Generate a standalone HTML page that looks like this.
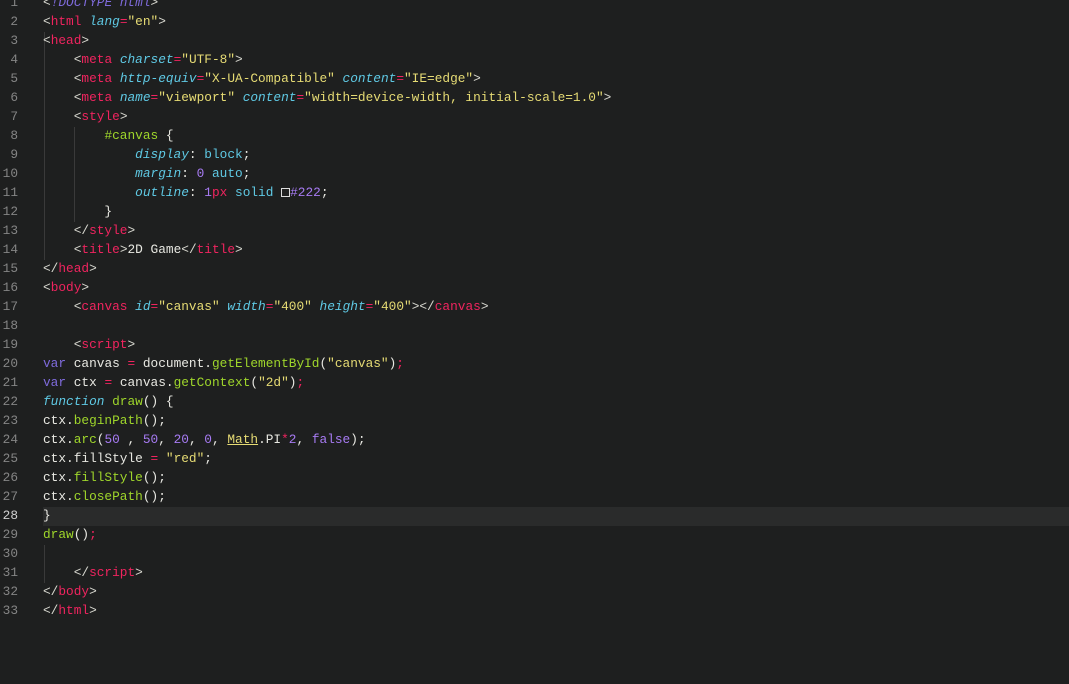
<!DOCTYPE html>
<html><head><meta charset="utf-8"><style>
body{margin:0;background:#1e1f1f;width:1069px;height:684px;overflow:hidden;position:relative;font-family:"Liberation Mono",monospace;font-size:12.8px;}
.hl{position:absolute;left:43px;right:0;top:507px;height:19px;background:#2a2b2b;}
.nums{position:absolute;left:0;top:-7px;width:18px;text-align:right;color:#858585;line-height:19px;white-space:pre;}
.code{position:absolute;left:43px;top:-7px;line-height:19px;white-space:pre;color:#e8e8e2;}
.g{position:absolute;width:1px;background:#3a3a3a;}
.t{color:#f0245f}.p{color:#d8d8d0}.a{color:#5fc9e4;font-style:italic}.s{color:#e6db74}.c{color:#5fc9e4}.n{color:#a77bf3}.f{color:#9fd62b}.k{color:#7f6bdc}.o{color:#f0245f}.i{color:#5fc9e4;font-style:italic}
</style></head><body>
<div class="hl"></div>
<div class="g" style="left:44px;top:32px;height:228px"></div>
<div class="g" style="left:74px;top:127px;height:95px"></div>
<div class="g" style="left:44px;top:545px;height:38px"></div>
<div class="nums">1
2
3
4
5
6
7
8
9
10
11
12
13
14
15
16
17
18
19
20
21
22
23
24
25
26
27
<span style="color:#d0d0d0">28</span>
29
30
31
32
33</div>
<div class="code"><span class="p">&lt;</span><span class="i" style="color:#7f6bdc">!DOCTYPE html</span><span class="p">&gt;</span>
<span class="p">&lt;</span><span class="t">html</span> <span class="a">lang</span><span class="o">=</span><span class="s">"en"</span><span class="p">&gt;</span>
<span class="p">&lt;</span><span class="t">head</span><span class="p">&gt;</span>
    <span class="p">&lt;</span><span class="t">meta</span> <span class="a">charset</span><span class="o">=</span><span class="s">"UTF-8"</span><span class="p">&gt;</span>
    <span class="p">&lt;</span><span class="t">meta</span> <span class="a">http-equiv</span><span class="o">=</span><span class="s">"X-UA-Compatible"</span> <span class="a">content</span><span class="o">=</span><span class="s">"IE=edge"</span><span class="p">&gt;</span>
    <span class="p">&lt;</span><span class="t">meta</span> <span class="a">name</span><span class="o">=</span><span class="s">"viewport"</span> <span class="a">content</span><span class="o">=</span><span class="s">"width=device-width, initial-scale=1.0"</span><span class="p">&gt;</span>
    <span class="p">&lt;</span><span class="t">style</span><span class="p">&gt;</span>
        <span class="f">#canvas</span> {
            <span class="a">display</span>: <span class="c">block</span>;
            <span class="a">margin</span>: <span class="n">0</span> <span class="c">auto</span>;
            <span class="a">outline</span>: <span class="n">1</span><span class="o">px</span> <span class="c">solid</span> <span style="display:inline-block;width:9px;height:9px;border:1px solid #ddd;background:#222;vertical-align:-1px;box-sizing:border-box"></span><span class="n">#222</span>;
        }
    <span class="p">&lt;/</span><span class="t">style</span><span class="p">&gt;</span>
    <span class="p">&lt;</span><span class="t">title</span><span class="p">&gt;</span>2D Game<span class="p">&lt;/</span><span class="t">title</span><span class="p">&gt;</span>
<span class="p">&lt;/</span><span class="t">head</span><span class="p">&gt;</span>
<span class="p">&lt;</span><span class="t">body</span><span class="p">&gt;</span>
    <span class="p">&lt;</span><span class="t">canvas</span> <span class="a">id</span><span class="o">=</span><span class="s">"canvas"</span> <span class="a">width</span><span class="o">=</span><span class="s">"400"</span> <span class="a">height</span><span class="o">=</span><span class="s">"400"</span><span class="p">&gt;&lt;/</span><span class="t">canvas</span><span class="p">&gt;</span>

    <span class="p">&lt;</span><span class="t">script</span><span class="p">&gt;</span>
<span class="k">var</span> canvas <span class="o">=</span> document.<span class="f">getElementById</span>(<span class="s">"canvas"</span>)<span class="o">;</span>
<span class="k">var</span> ctx <span class="o">=</span> canvas.<span class="f">getContext</span>(<span class="s">"2d"</span>)<span class="o">;</span>
<span class="i">function</span> <span class="f">draw</span>() {
ctx.<span class="f">beginPath</span>();
ctx.<span class="f">arc</span>(<span class="n">50</span> , <span class="n">50</span>, <span class="n">20</span>, <span class="n">0</span>, <span class="s" style="text-decoration:underline">Math</span>.PI<span class="o">*</span><span class="n">2</span>, <span class="n">false</span>);
ctx.fillStyle <span class="o">=</span> <span class="s">"red"</span>;
ctx.<span class="f">fillStyle</span>();
ctx.<span class="f">closePath</span>();
}
<span class="f">draw</span>()<span class="o">;</span>

    <span class="p">&lt;/</span><span class="t">script</span><span class="p">&gt;</span>
<span class="p">&lt;/</span><span class="t">body</span><span class="p">&gt;</span>
<span class="p">&lt;/</span><span class="t">html</span><span class="p">&gt;</span></div>
</body></html>
